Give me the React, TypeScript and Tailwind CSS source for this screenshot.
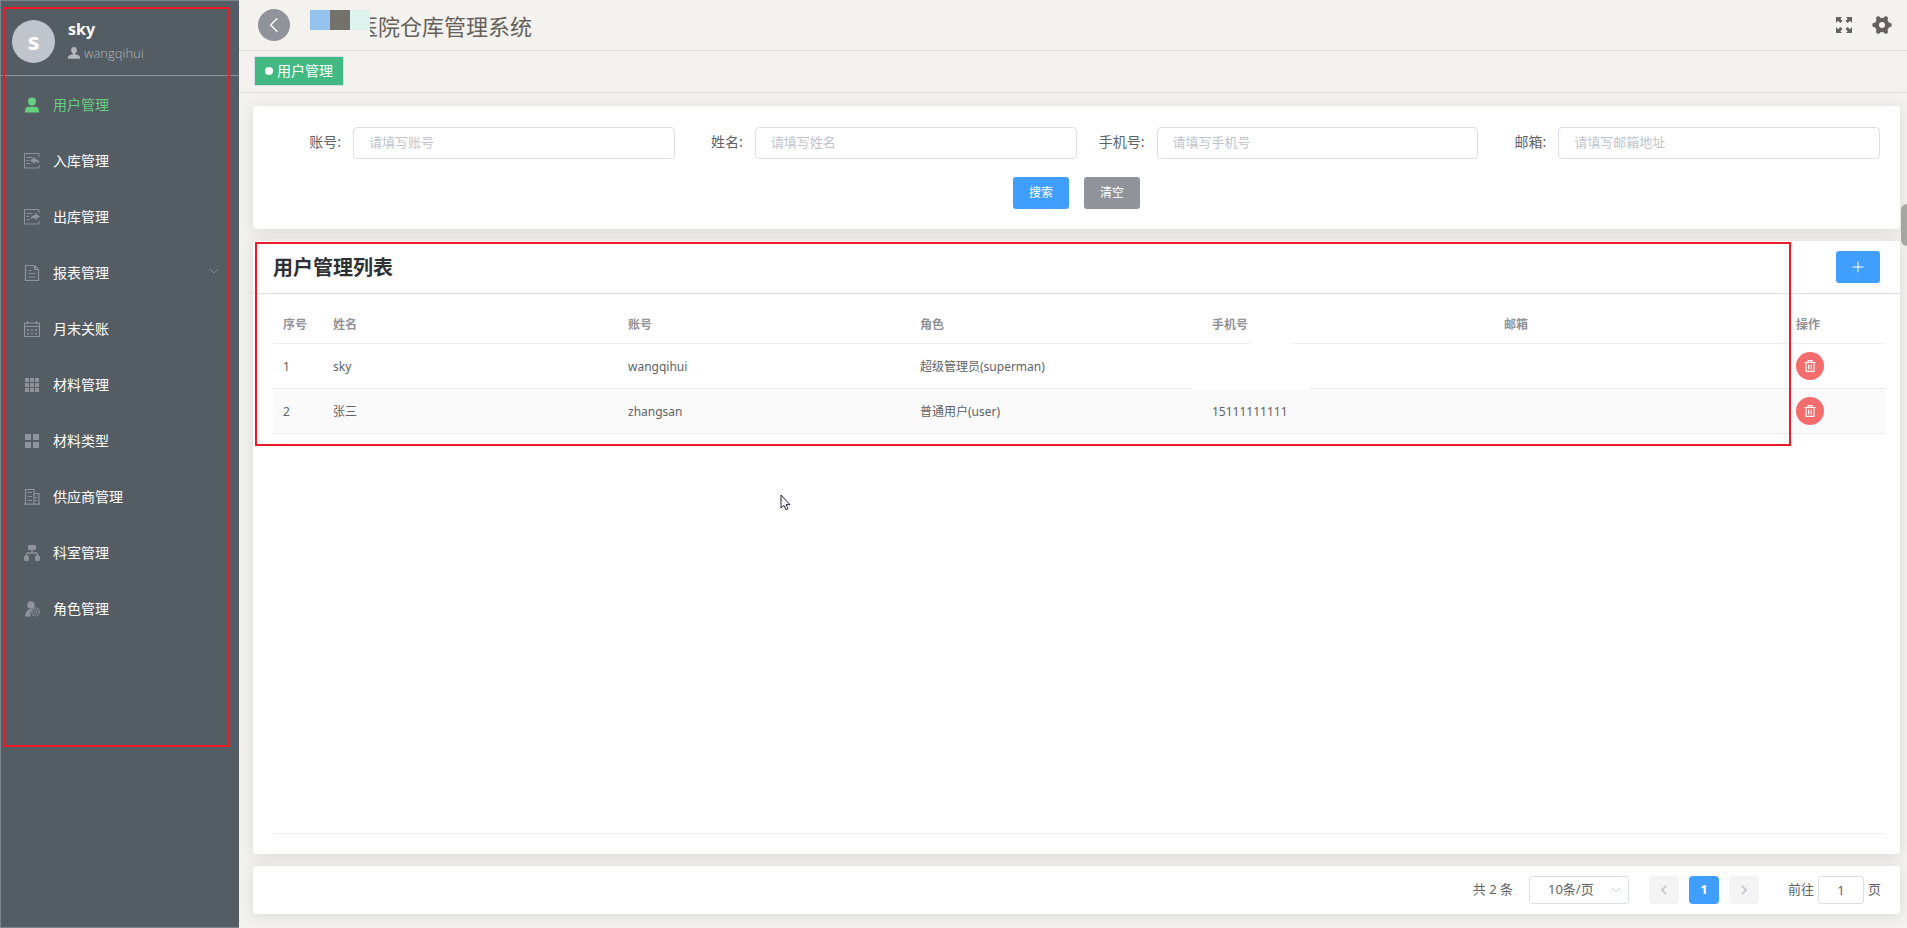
import type { ReactNode } from 'react';

interface MenuItem {
    label: string;
    icon: ReactNode;
    active?: boolean;
    hasChildren?: boolean;
}

interface User {
    id: number;
    name: string;
    account: string;
    role: string;
    phone: string;
    email: string;
}

/* ---------- Icons ---------- */

function UserIcon({ className = 'w-4 h-4' }: { className?: string }) {
    return (
        <svg viewBox="0 0 16 16" className={className} fill="currentColor">
            <circle cx="8" cy="4.6" r="4" />
            <path d="M1 15.4v-2.2c0-2.2 1.6-3.4 3.8-3.4h6.4c2.2 0 3.8 1.2 3.8 3.4v2.2z" />
        </svg>
    );
}

function BustIcon() {
    return (
        <svg viewBox="0 0 12 12" className="w-3 h-3" fill="currentColor">
            <ellipse cx="6" cy="3.2" rx="2.8" ry="3.2" />
            <path d="M4.8 5.6h2.4v1.6c2.8.5 4.6 1.4 4.8 3v1.6H0v-1.6c.2-1.6 2-2.5 4.8-3z" />
        </svg>
    );
}

function InboundIcon() {
    return (
        <svg viewBox="0 0 16 16" className="w-4 h-4" fill="none" stroke="currentColor">
            <path d="M15 4V.5H.5v14.500H15V12M2.500 4.500h6M2.500 7.500h2.500M2.500 10.500h4" />
            <path d="M6 7.500l5-3.700v2.200c3 .2 4.500 1.800 4.500 4.500-1-1.200-2.500-1.700-4.500-1.600v2z" fill="currentColor" stroke="none" />
        </svg>
    );
}

function OutboundIcon() {
    return (
        <svg viewBox="0 0 16 16" className="w-4 h-4" fill="none" stroke="currentColor">
            <path d="M15 4V.5H.5v14.500H15V12M2.500 4.500h6M2.500 7.500h2.500M2.500 10.500h3" />
            <path d="M16 7.500l-5-3.700v2.200c-3 .2-4.500 1.800-4.500 4.500 1-1.200 2.500-1.700 4.500-1.600v2z" fill="currentColor" stroke="none" />
        </svg>
    );
}

function DocumentIcon() {
    return (
        <svg viewBox="0 0 16 16" className="w-4 h-4" fill="none" stroke="currentColor" strokeWidth="1.200">
            <path d="M1.500 .5h9l4 4v11h-13zM10.500 .5v4h4M4.500 5.500h3M4.500 8.500h7M4.500 12h7" />
        </svg>
    );
}

function CalendarIcon() {
    return (
        <svg viewBox="0 0 16 16" className="w-4 h-4" fill="none" stroke="currentColor" strokeWidth="1.200">
            <path d="M.5 2h15v13.500H.5zM.5 5.500h15M3.500 0v3.500M12.500 0v3.500" />
            <path d="M3 9h10M3 12.500h10" strokeWidth="1.500" strokeDasharray="2 2" />
        </svg>
    );
}

function GridIcon() {
    return (
        <svg viewBox="0 0 16 16" className="w-4 h-4" fill="currentColor">
            <path d="M1 1h4v4H1zM6 1h4v4H6zM11 1h4v4h-4zM1 6h4v4H1zM6 6h4v4H6zM11 6h4v4h-4zM1 11h4v4H1zM6 11h4v4H6zM11 11h4v4h-4z" />
        </svg>
    );
}

function MenuIcon() {
    return (
        <svg viewBox="0 0 16 16" className="w-4 h-4" fill="currentColor">
            <path d="M1 1h6v6H1zM9 1h6v6H9zM1 9h6v6H1zM9 9h6v6H9z" />
        </svg>
    );
}

function OfficeIcon() {
    return (
        <svg viewBox="0 0 16 16" className="w-4 h-4" fill="none" stroke="currentColor" strokeWidth="1.200">
            <path d="M1.500 15V.5h8.500v14.500M10 4.500h5v10.500M0 15.200h16M3.500 3.500h4.500M3.500 7.500h4.500M3.500 11.500h4.500M11 8.500h2.500M11 11.500h2" />
        </svg>
    );
}

function TreeIcon() {
    return (
        <svg viewBox="0 0 16 16" className="w-4 h-4" fill="currentColor">
            <rect x="4" y="0" width="8" height="5" rx="1" />
            <rect x="0" y="10.500" width="5" height="5.500" rx="1.500" />
            <rect x="11" y="10.500" width="5" height="5.500" rx="1.500" />
            <path d="M8 4v4M2.500 11V9.500C2.500 8.400 3.200 8 4 8h8c.8 0 1.500.4 1.500 1.500V11" fill="none" stroke="currentColor" strokeWidth="1.300" />
        </svg>
    );
}

function RoleIcon() {
    return (
        <svg viewBox="0 0 16 16" className="w-4 h-4">
            <circle cx="7" cy="4" r="3.800" fill="currentColor" />
            <path d="M1 15.500c0-4 2-6.500 5-7.500h3c-2.500 1.500-3.500 4.500-2 7.500z" fill="currentColor" />
            <circle cx="11.500" cy="11" r="3.800" fill="none" stroke="currentColor" strokeWidth="1.300" strokeDasharray="1.800 .6" />
            <circle cx="11.500" cy="11" r="1.600" fill="none" stroke="currentColor" />
        </svg>
    );
}

function ChevronIcon({ className, direction }: { className: string; direction: 'left' | 'right' | 'down' }) {
    const paths = {
        left: 'M8.500 1L3.500 6l5 5',
        right: 'M3.500 1l5 5-5 5',
        down: 'M1 3.500l5 5 5-5',
    };
    return (
        <svg viewBox="0 0 12 12" className={className} fill="none" stroke="currentColor">
            <path d={paths[direction]} />
        </svg>
    );
}

function FullscreenIcon() {
    return (
        <svg viewBox="0 0 16 16" className="w-4 h-4" fill="currentColor">
            <path d="M0 0h6L4.300 1.700l2.200 2.200-2.100 2.100-2.400-2.300L0 6zM16 0v6l-2-2.300-2.400 2.300-2.100-2.100 2.200-2.200L10 0zM0 16v-6l2 2.300 2.400-2.300 2.100 2.100-2.200 2.200L6 16zM16 16h-6l1.700-1.700-2.200-2.200 2.100-2.100 2.400 2.300 2-2.300z" />
        </svg>
    );
}

function GearIcon() {
    return (
        <svg viewBox="0 0 20 20" className="w-5 h-5" stroke="currentColor">
            <path d="M2.500 10h15M6.250 3.500l7.500 13M13.750 3.500l-7.500 13" strokeWidth="4.500" strokeLinecap="round" />
            <circle cx="10" cy="10" r="5" fill="none" strokeWidth="4.500" />
            <circle cx="10" cy="10" r="3" className="fill-[#f4f2ee]" stroke="none" />
        </svg>
    );
}

function TrashIcon() {
    return (
        <svg viewBox="0 0 12 12" className="w-3 h-3" fill="none" stroke="currentColor" strokeWidth="1.200">
            <path d="M.5 2.500h11M4 2.500V.7h4v1.800M2 2.500v8.800h8V2.500M4.700 4.500v5M7.300 4.500v5" />
        </svg>
    );
}

/* ---------- Data ---------- */

const menu: MenuItem[] = [
    { label: '用户管理', icon: <UserIcon />, active: true },
    { label: '入库管理', icon: <InboundIcon /> },
    { label: '出库管理', icon: <OutboundIcon /> },
    { label: '报表管理', icon: <DocumentIcon />, hasChildren: true },
    { label: '月末关账', icon: <CalendarIcon /> },
    { label: '材料管理', icon: <GridIcon /> },
    { label: '材料类型', icon: <MenuIcon /> },
    { label: '供应商管理', icon: <OfficeIcon /> },
    { label: '科室管理', icon: <TreeIcon /> },
    { label: '角色管理', icon: <RoleIcon /> },
];

const filters = [
    { id: 'account', label: '账号:', placeholder: '请填写账号' },
    { id: 'name', label: '姓名:', placeholder: '请填写姓名' },
    { id: 'phone', label: '手机号:', placeholder: '请填写手机号' },
    { id: 'email', label: '邮箱:', placeholder: '请填写邮箱地址' },
];

const users: User[] = [
    { id: 1, name: 'sky', account: 'wangqihui', role: '超级管理员(superman)', phone: '', email: '' },
    { id: 2, name: '张三', account: 'zhangsan', role: '普通用户(user)', phone: '15111111111', email: '' },
];

const cardClass = 'bg-white rounded shadow-[0_2px_16px_0_rgba(0,0,0,0.1)]';
const cellClass = 'px-2.5 pt-0.5 border-b border-[#ebeef5]';

/* ---------- Layout ---------- */

function Sidebar() {
    return (
        <aside className="relative w-[239px] shrink-0 bg-[#545c64] border-l border-y border-[#7d848b]">
            <div className="h-[75px] pt-1.5 pl-[11px] flex items-center gap-[13px] border-b border-[#8f959b]">
                <div className="w-[43px] h-[43px] rounded-full bg-[#c0c4cc] text-white text-2xl font-bold flex items-center justify-center">
                    s
                </div>
                <div>
                    <div className="text-base leading-5 font-bold text-white">sky</div>
                    <div className="pt-1 flex items-center gap-1 text-[#b4b7bc]">
                        <BustIcon />
                        <span className="font-['Open_Sans'] font-light text-[13px] leading-5">wangqihui</span>
                    </div>
                </div>
            </div>

            <nav className="pt-px">
                {menu.map((item) => (
                    <a
                        key={item.label}
                        href="#"
                        className={`h-14 pl-[23px] pr-5 flex items-center gap-[13px] text-sm ${item.active ? 'text-[#67d081]' : 'text-white'}`}
                    >
                        <span className={item.active ? '' : 'text-[#909399]'}>{item.icon}</span>
                        <span className="flex-1">{item.label}</span>
                        {item.hasChildren && <ChevronIcon direction="down" className="w-2.5 h-2.5 mb-1 text-[#909399]" />}
                    </a>
                ))}
            </nav>

            {/* Highlight frame */}
            <div className="absolute left-[2px] top-[6px] w-[227px] h-[740px] border-2 border-[#ed1c24] pointer-events-none" />
        </aside>
    );
}

function Header() {
    return (
        <header className="h-[51px] px-[15px] pl-[19px] flex items-center border-b border-[#dcdddf]">
            <button type="button" aria-label="返回" className="w-8 h-8 rounded-full bg-[#909399] text-white flex items-center justify-center">
                <ChevronIcon direction="left" className="w-4 h-4" />
            </button>
            <div className="relative ml-[66px] pt-0.5">
                <h1 className="text-[22px] leading-8 text-[#65605b]">医院仓库管理系统</h1>
                {/* Hospital name is hidden */}
                <div className="absolute -left-[46px] top-[2px] w-[60px] h-8 bg-[#f4f2ee] flex items-start">
                    <span className="w-5 h-5 bg-[#94c4ee]" />
                    <span className="w-5 h-5 bg-[#73716c]" />
                    <span className="w-5 h-5 bg-[#def2ee]" />
                </div>
            </div>
            <div className="ml-auto flex items-center gap-5 text-[#65605b]">
                <button type="button" aria-label="全屏"><FullscreenIcon /></button>
                <button type="button" aria-label="设置"><GearIcon /></button>
            </div>
        </header>
    );
}

function SearchForm() {
    return (
        <form className={`${cardClass} p-5 pt-[21px] flex flex-col gap-[18px]`}>
            <div className="grid grid-cols-4">
                {filters.map((f) => (
                    <div key={f.id} className="flex items-center">
                        <label htmlFor={f.id} className="w-20 pr-3 pb-0.5 text-right text-sm text-[#606266]">{f.label}</label>
                        <input
                            id={f.id}
                            placeholder={f.placeholder}
                            className="flex-1 min-w-0 h-8 px-[15px] pb-0.5 text-[13px] rounded border border-[#dcdfe6] placeholder:text-[#c0c4cc]"
                        />
                    </div>
                ))}
            </div>
            <div className="flex justify-center gap-[15px] text-xs text-white">
                <button type="button" className="w-14 h-8 rounded-[3px] bg-[#409eff]">搜索</button>
                <button type="button" className="w-14 h-8 rounded-[3px] bg-[#909399]">清空</button>
            </div>
        </form>
    );
}

function UserList() {
    return (
        <section className={`${cardClass} relative flex-1 flex flex-col`}>
            <div className="h-[53px] px-5 flex items-center justify-between border-b border-[#dcdfe6]">
                <h2 className="pt-0.5 text-xl font-bold text-[#303133]">用户管理列表</h2>
                <button type="button" aria-label="新增" className="w-11 h-8 rounded-[3px] bg-[#409eff] text-white flex items-center justify-center">
                    <svg viewBox="0 0 12 12" className="w-3 h-3" stroke="currentColor"><path d="M6 .5v11M.5 6h11" /></svg>
                </button>
            </div>

            <div className="flex-1 mt-2.5 mb-5 ml-5 mr-3.5 border-b border-[#ebeef5]">
                <table className="w-full table-fixed border-separate border-spacing-0 text-xs text-left text-[#606266]">
                    <colgroup>
                        <col className="w-[50px]" />
                        <col className="w-[295px]" />
                        <col />
                        <col />
                        <col />
                        <col />
                        <col className="w-[100px]" />
                    </colgroup>
                    <thead>
                        <tr className="h-10 text-[#909399]">
                            {['序号', '姓名', '账号', '角色', '手机号', '邮箱', '操作'].map((h) => (
                                <th key={h} className={`${cellClass} font-bold`}>{h}</th>
                            ))}
                        </tr>
                    </thead>
                    <tbody>
                        {users.map((u) => (
                            <tr key={u.id} className="h-[45px] even:bg-[#fafafa]">
                                <td className={cellClass}>{u.id}</td>
                                <td className={cellClass}>{u.name}</td>
                                <td className={cellClass}>{u.account}</td>
                                <td className={cellClass}>{u.role}</td>
                                <td className={cellClass}>{u.phone}</td>
                                <td className={cellClass}>{u.email}</td>
                                <td className="px-2.5 border-b border-[#ebeef5]">
                                    <button type="button" aria-label="删除" className="w-7 h-7 rounded-full bg-[#f56c6c] text-white flex items-center justify-center">
                                        <TrashIcon />
                                    </button>
                                </td>
                            </tr>
                        ))}
                    </tbody>
                </table>
            </div>

            {/* Blanked phone number */}
            <div className="absolute left-[997px] top-[99px] w-10 h-8 bg-white" />
            <div className="absolute left-[937px] top-[129px] w-[120px] h-5 bg-white" />

            {/* Highlight frame */}
            <div className="absolute left-[2px] right-[109px] top-px h-[204px] border-2 border-[#ed1c24] pointer-events-none" />

            {/* Mouse pointer */}
            <svg viewBox="0 0 12 17" className="absolute left-[527px] top-[253px] w-3 h-[17px]">
                <path d="M1 1v13l3-2.600 2 4.300 2-.9-2-4.100h4z" fill="#fff" stroke="#222436" />
            </svg>
        </section>
    );
}

function Pagination() {
    return (
        <footer className={`${cardClass} h-12 pr-[19px] flex items-center justify-end text-[13px] text-[#606266]`}>
            <span className="mr-4">共 2 条</span>
            <div className="relative mr-5">
                <select aria-label="每页条数" className="w-[100px] h-7 pl-[18px] appearance-none bg-white rounded-[3px] border border-[#dcdfe6]">
                    <option>10条/页</option>
                </select>
                <ChevronIcon direction="down" className="absolute right-2 top-[9px] w-2.5 h-2.5 text-[#c0c4cc] pointer-events-none" />
            </div>
            <div className="flex gap-2.5">
                <button type="button" aria-label="上一页" className="w-[30px] h-7 rounded-sm bg-[#f4f4f5] text-[#c0c4cc] flex items-center justify-center">
                    <ChevronIcon direction="left" className="w-2.5 h-2.5 stroke-2" />
                </button>
                <button type="button" className="w-[30px] h-7 rounded-sm bg-[#409eff] text-white font-bold">1</button>
                <button type="button" aria-label="下一页" className="w-[30px] h-7 rounded-sm bg-[#f4f4f5] text-[#c0c4cc] flex items-center justify-center">
                    <ChevronIcon direction="right" className="w-2.5 h-2.5 stroke-2" />
                </button>
            </div>
            <label className="ml-[29px] flex items-center gap-1">
                前往
                <input defaultValue="1" className="w-[46px] h-7 text-center rounded-[3px] border border-[#dcdfe6]" />
                页
            </label>
        </footer>
    );
}

export default function App() {
    return (
        <div className="min-h-screen flex bg-[#f4f2ee] font-['Noto_Sans','Noto_Sans_CJK_SC',sans-serif]">
            <Sidebar />
            <div className="relative flex-1 min-w-0 flex flex-col">
                <Header />
                <div className="h-[42px] px-[15px] pt-[5px] border-b border-[#dcdddf]">
                    <a href="#" className="w-fit h-[30px] px-2.5 flex items-center gap-1 text-sm text-white bg-[#42b983] border border-[#d8dce5]">
                        <span className="w-2 h-2 rounded-full bg-white" />
                        用户管理
                    </a>
                </div>
                <main className="flex-1 flex flex-col gap-3 pt-[13px] pb-3.5 pl-3.5 pr-[7px] overflow-hidden">
                    <SearchForm />
                    <UserList />
                    <Pagination />
                </main>

                {/* Drawer handle on the window edge */}
                <div className="absolute right-0 top-[204px] w-1.5 h-[42px] rounded-l-md bg-[#a5a5a3]" />
            </div>
        </div>
    );
}
